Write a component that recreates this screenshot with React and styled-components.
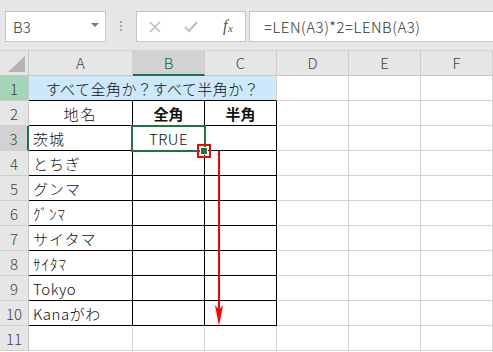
import React from 'react';
import styled, { createGlobalStyle } from 'styled-components';

const GlobalStyle = createGlobalStyle`
  html, body { margin: 0; padding: 0; background: #fff; }
  body {
    font-family: "Noto Sans CJK JP", "Noto Sans", sans-serif;
    font-weight: 300;
    overflow: hidden;
    width: 493px;
    height: 352px;
  }
`;

const GRID = '#d4d4d4';
const BLACK = '#000';
const GREEN = '#217346';

const Toolbar = styled.div`
  height: 51px;
  box-sizing: border-box;
  background: #e6e6e6;
  border-bottom: 1px solid #d2d2d2;
  display: flex;
  align-items: flex-start;
  padding-top: 11px;
  overflow: hidden;
`;

const Box = styled.div`
  height: 31px;
  box-sizing: border-box;
  background: #fff;
  border: 1px solid #c6c6c6;
  display: flex;
  align-items: center;
  flex: none;
`;

const NameBox = styled(Box)`
  width: 101px;
  margin-left: 5px;
  padding: 0 6px 0 7px;
  justify-content: space-between;
  font-size: 15px;
  color: #333;
`;

const Caret = styled.span`
  width: 0;
  height: 0;
  border-left: 4px solid transparent;
  border-right: 4px solid transparent;
  border-top: 4px solid #777;
  margin-top: -3px;
`;

const Grip = styled.div`
  width: 2px;
  margin: 10px 14px 0 14px;
  display: flex;
  flex-direction: column;
  gap: 2px;
  span {
    display: block;
    width: 2px;
    height: 2px;
    background: #a8a8a8;
  }
`;

const FxBox = styled(Box)`
  width: 110px;
  padding-left: 12px;
  gap: 23px;
  svg { overflow: visible; }
`;

const FormulaBox = styled(Box)`
  width: 260px;
  margin-left: 3px;
  padding-left: 14px;
  font-size: 15px;
  color: #333;
  letter-spacing: 0.5px;
  border-right: none;
`;

const Sheet = styled.div`
  position: relative;
  display: grid;
  grid-template-columns: 29px 104px repeat(5, 72px);
  grid-auto-rows: 25px;
`;

const Corner = styled.div`
  background: #e6e6e6;
  border-right: 1px solid #c6c6c6;
  border-bottom: 1px solid #c6c6c6;
  box-sizing: border-box;
  position: relative;
  &::after {
    content: '';
    position: absolute;
    right: 3px;
    bottom: 3px;
    border-left: 17px solid transparent;
    border-bottom: 16px solid #b4b4b4;
  }
`;

const ColHead = styled.div`
  box-sizing: border-box;
  background: ${p => (p.$sel ? '#d2d2d2' : '#e6e6e6')};
  border-right: 1px solid #cfcfcf;
  border-bottom: ${p => (p.$sel ? `2px solid ${GREEN}` : '1px solid #c6c6c6')};
  color: ${p => (p.$sel ? '#1d5a37' : '#444')};
  font-size: 15px;
  display: flex;
  align-items: center;
  justify-content: center;
  padding-bottom: ${p => (p.$sel ? '0' : '1px')};
`;

const RowHead = styled.div`
  box-sizing: border-box;
  background: ${p => (p.$tone === 'hi' ? '#a3d6b6' : p.$tone === 'sel' ? '#d2d2d2' : '#e6e6e6')};
  border-right: ${p => (p.$tone === 'sel' ? `2px solid ${GREEN}` : '1px solid #c6c6c6')};
  border-bottom: 1px solid #cfcfcf;
  color: ${p => (p.$tone === 'sel' ? '#1d5a37' : '#444')};
  font-size: 15px;
  display: flex;
  align-items: center;
  justify-content: center;
`;

const Cell = styled.div`
  box-sizing: border-box;
  grid-column: span ${p => p.$span || 1};
  background: ${p => p.$bg || '#fff'};
  border-right: 1px solid ${p => p.$r || GRID};
  border-bottom: 1px solid ${p => p.$b || GRID};
  font-size: 15px;
  font-weight: ${p => (p.$bold ? 700 : 300)};
  color: #111;
  display: flex;
  align-items: center;
  justify-content: ${p => (p.$center ? 'center' : 'flex-start')};
  padding-left: ${p => (p.$center ? '0' : '4px')};
  white-space: nowrap;
  overflow: hidden;
  letter-spacing: ${p => p.$ls || '0'};
`;

const Selection = styled.div`
  position: absolute;
  left: 131px;
  top: 74px;
  width: 75px;
  height: 27px;
  box-sizing: border-box;
  border: 2px solid ${GREEN};
`;

const Handle = styled.div`
  position: absolute;
  left: 201px;
  top: 97px;
  width: 6px;
  height: 6px;
  box-sizing: border-box;
  background: ${GREEN};
  outline: 1px solid #fff;
`;

const Marker = styled.div`
  position: absolute;
  left: 197px;
  top: 93px;
  width: 14px;
  height: 14px;
  box-sizing: border-box;
  border: 2px solid #f00;
`;

const Arrow = styled.svg`
  position: absolute;
  left: 212px;
  top: 100px;
`;

const names = ['茨城', 'とちぎ', 'グンマ', 'ｸﾞﾝﾏ', 'サイタマ', 'ｻｲﾀﾏ', 'Tokyo', 'Kanaがわ'];

const Rest = () => (
  <>
    <Cell />
    <Cell />
    <Cell />
  </>
);

const App = () => {
  return (
    <>
      <GlobalStyle />
      <Toolbar>
        <NameBox>
          <span>B3</span>
          <Caret />
        </NameBox>
        <Grip>
          <span />
          <span />
          <span />
        </Grip>
        <FxBox>
          <svg width="12" height="12" viewBox="0 0 12 12">
            <path d="M1 1 L11 11 M11 1 L1 11" stroke="#bdbdbd" strokeWidth="1.6" fill="none" />
          </svg>
          <svg width="14" height="12" viewBox="0 0 14 12">
            <path d="M1 6 L5 10 L13 1" stroke="#bdbdbd" strokeWidth="2" fill="none" />
          </svg>
          <svg width="16" height="18" viewBox="0 0 16 18">
            <text x="2" y="13" fontFamily="Liberation Serif, serif" fontStyle="italic" fontSize="16" fill="#555">f</text>
            <text x="7" y="14" fontFamily="Liberation Serif, serif" fontStyle="italic" fontSize="11" fill="#555">x</text>
          </svg>
        </FxBox>
        <FormulaBox>=LEN(A3)*2=LENB(A3)</FormulaBox>
      </Toolbar>
      <Sheet>
        <Corner />
        {['A', 'B', 'C', 'D', 'E', 'F'].map(c => (
          <ColHead key={c} $sel={c === 'B'}>{c}</ColHead>
        ))}

        <RowHead $tone="hi">1</RowHead>
        <Cell $span={3} $bg="#cce8fa" $b={BLACK} $center $ls="0.5px">
          すべて全角か？すべて半角か？
        </Cell>
        <Rest />

        <RowHead>2</RowHead>
        <Cell $r={BLACK} $b={BLACK} $center $ls="2px">地名</Cell>
        <Cell $r={BLACK} $b={BLACK} $center $bold>全角</Cell>
        <Cell $r={BLACK} $b={BLACK} $center $bold>半角</Cell>
        <Rest />

        {names.map((n, i) => (
          <React.Fragment key={n}>
            <RowHead $tone={i === 0 ? 'sel' : undefined}>{i + 3}</RowHead>
            <Cell $r={BLACK} $b={BLACK} $ls={i < 6 ? '1px' : '0.5px'}>{n}</Cell>
            <Cell $r={BLACK} $b={BLACK} $center $ls="0.5px">{i === 0 ? 'TRUE' : ''}</Cell>
            <Cell $r={BLACK} $b={BLACK} />
            <Rest />
          </React.Fragment>
        ))}

        <RowHead>11</RowHead>
        <Cell />
        <Cell />
        <Cell />
        <Rest />

        <Selection />
        <Handle />
        <Marker />
        <Arrow width="14" height="178" viewBox="0 0 14 178">
          <rect x="6" y="0" width="2" height="160" fill="#f00" />
          <polygon points="3,154 7,159 11,154 7,175" fill="#f00" />
        </Arrow>
      </Sheet>
    </>
  );
};

export default App;
